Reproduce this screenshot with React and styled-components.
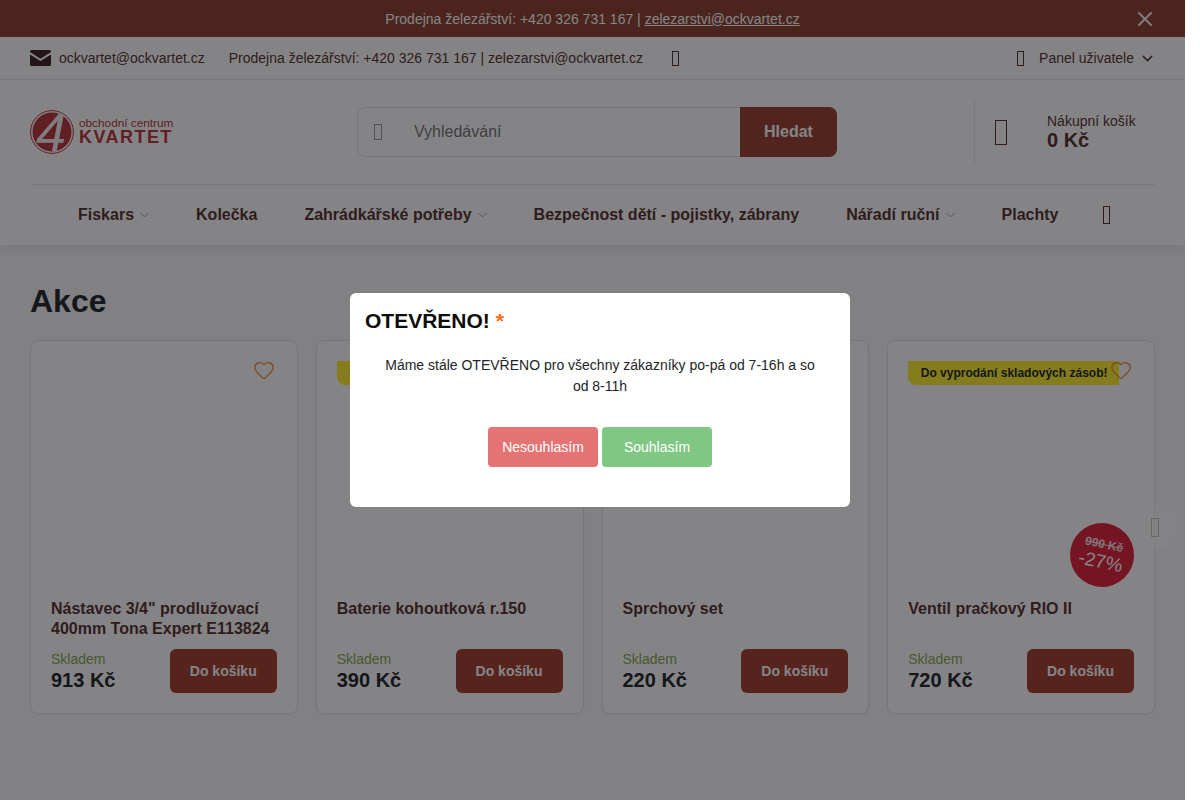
import React from 'react';
import styled, { createGlobalStyle } from 'styled-components';
import { ChevronDown, Heart, X } from 'lucide-react';

const GlobalStyle = createGlobalStyle`
  html, body {
    margin: 0;
    height: 800px;
    overflow: hidden;
    background: #ffffff;
  }
  * {
    box-sizing: border-box;
  }
  body {
    font-family: "Liberation Sans", Arial, sans-serif;
    color: #212529;
  }
`;

const Page = styled.div`
  width: 1185px;
  height: 800px;
  background: #f9f9f9;
  position: relative;
  overflow: hidden;
`;

const TopBar = styled.div`
  height: 37px;
  display: grid;
  grid-template-columns: 1fr auto 1fr;
  align-items: center;
  background: #8c3e2e;
  color: #ffffff;
  font-size: 14px;

  a {
    color: #ffffff;
    text-decoration: underline;
  }

  svg {
    justify-self: end;
    margin-right: 28px;
    color: #ffffff;
    opacity: 0.9;
  }
`;

const InfoBar = styled.div`
  height: 43px;
  padding: 0 30px;
  display: flex;
  align-items: center;
  justify-content: space-between;
  background: #ffffff;
  border-bottom: 1px solid #ececee;
  font-size: 14px;
  color: #55302c;
`;

const InfoGroup = styled.div`
  display: flex;
  align-items: center;
`;

const MailLink = styled.span`
  display: flex;
  align-items: center;
  gap: 8px;
  margin-right: 24px;
`;

// box the browser draws for an icon font that did not load
const Tofu = styled.span`
  display: inline-block;
  flex: none;
  width: ${p => p.$w}px;
  height: ${p => p.$h}px;
  border: 1px solid ${p => p.$color || 'currentColor'};
`;

const InfoIcon = styled(Tofu)`
  margin-left: 29px;
`;

const PanelLink = styled.span`
  display: flex;
  align-items: center;
  margin-right: -1px;

  ${Tofu} {
    margin-right: 15px;
  }

  svg {
    margin-left: 5px;
  }
`;

const Header = styled.div`
  background: #ffffff;
  padding: 0 30px;
  position: relative;
  box-shadow: 0 4px 12px rgba(0, 0, 0, 0.08);
`;

const HeaderMain = styled.div`
  height: 105px;
  display: grid;
  grid-template-columns: 327px 480px 1fr;
  align-items: center;
  border-bottom: 1px solid #e6e6e8;
`;

const Logo = styled.div`
  display: flex;
  align-items: center;
  gap: 5px;
  height: 44px;
  color: #b83238;
`;

const LogoMarkSvg = styled.svg`
  flex: none;
  overflow: visible;
`;

const LogoText = styled.div`
  display: flex;
  flex-direction: column;
  margin-top: -4px;

  span {
    font-size: 11.8px;
    line-height: 12px;
    white-space: nowrap;
  }

  strong {
    margin-top: 1px;
    font-size: 18px;
    line-height: 14px;
    letter-spacing: 1.45px;
    font-weight: 700;
  }
`;

const SearchBox = styled.div`
  height: 50px;
  display: flex;
  align-items: stretch;
  border: 1px solid #e2e2e6;
  border-radius: 8px;
  background: #ffffff;
`;

const SearchIcon = styled.div`
  width: 56px;
  padding-left: 16px;
  display: flex;
  align-items: center;
  color: #9a9aa0;
`;

const SearchPlaceholder = styled.div`
  flex: 1;
  display: flex;
  align-items: center;
  font-size: 16px;
  color: #757575;
`;

const SearchButton = styled.button`
  width: 97px;
  margin: -1px;
  border: none;
  border-radius: 0 8px 8px 0;
  background: #983e2c;
  color: #ffffff;
  font-family: inherit;
  font-size: 16px;
  font-weight: 700;
`;

const Cart = styled.div`
  justify-self: end;
  width: 181px;
  height: 64px;
  display: flex;
  align-items: center;
  border-left: 1px solid #e6e6e8;
  padding-left: 20px;
  color: #55302c;
`;

const CartText = styled.div`
  margin-left: 40px;
  display: flex;
  flex-direction: column;

  span {
    font-size: 14px;
    line-height: 16px;
  }

  strong {
    font-size: 20px;
    line-height: 23px;
  }
`;

const Nav = styled.nav`
  height: 60px;
  display: flex;
  align-items: center;
  gap: 47px;
  padding-left: 48px;
  font-size: 16px;
  font-weight: 700;
  color: #55302c;

  ${Tofu} {
    margin-left: -2px;
  }
`;

const NavItem = styled.span`
  display: flex;
  align-items: center;
  gap: 6px;
  white-space: nowrap;

  svg {
    color: #a0a0a4;
  }
`;

const Content = styled.main`
  padding: 37px 30px 0;
`;

const Heading = styled.h1`
  margin: 0 0 20px;
  font-size: 32px;
  line-height: 38px;
  font-weight: 700;
  color: #212529;
`;

const CardGrid = styled.div`
  position: relative;
  display: grid;
  grid-template-columns: repeat(4, 1fr);
  gap: 18px;
`;

const Card = styled.article`
  position: relative;
  padding: 20px;
  background: #ffffff;
  border: 1px solid #e2e2e6;
  border-radius: 8px;
  box-shadow: 0 1px 3px rgba(0, 0, 0, 0.05);
`;

const ImageArea = styled.div`
  height: 238px;
`;

const Badge = styled.div`
  position: absolute;
  top: 20px;
  left: 20px;
  height: 24px;
  width: 211px;
  padding-left: 12.500px;
  display: flex;
  align-items: center;
  background: #ffee2c;
  border-bottom-left-radius: 8px;
  font-size: 12px;
  font-weight: 700;
  color: #212529;
  white-space: nowrap;
`;

const Wish = styled.span`
  position: absolute;
  top: 18px;
  right: 22px;
  color: #f08a3a;
  display: flex;
`;

const Discount = styled.div`
  position: absolute;
  right: 20px;
  top: 182px;
  width: 64px;
  height: 64px;
  border-radius: 50%;
  background: #e0203a;
  color: #ffffff;
  display: flex;
  flex-direction: column;
  align-items: center;
  justify-content: center;
  transform: rotate(12deg);

  s {
    font-size: 12px;
    line-height: 13px;
    font-weight: 700;
    opacity: 0.85;
  }

  span {
    font-size: 19px;
    line-height: 21px;
  }
`;

const Title = styled.h3`
  margin: 0;
  height: 40px;
  font-size: 16px;
  line-height: 20px;
  font-weight: 700;
  color: #55302c;
`;

const CardFooter = styled.div`
  margin-top: 10px;
  display: flex;
  align-items: flex-start;
  justify-content: space-between;
`;

const Stock = styled.div`
  padding-top: 2px;
  display: flex;
  flex-direction: column;

  span {
    font-size: 14px;
    line-height: 16px;
    color: #8aa552;
  }

  strong {
    font-size: 20px;
    line-height: 26px;
    color: #212529;
  }
`;

const CartButton = styled.button`
  width: 107px;
  height: 44px;
  border: none;
  border-radius: 6px;
  background: #a33f2c;
  color: #ffffff;
  font-family: inherit;
  font-size: 14px;
  font-weight: 700;
`;

const CarouselNext = styled.div`
  position: absolute;
  right: -23px;
  top: 164px;
  width: 46px;
  height: 46px;
  border-radius: 50%;
  background: rgba(255, 255, 255, 0.6);
  display: flex;
  align-items: center;
  justify-content: center;
  color: #cdbfbb;
`;

const Overlay = styled.div`
  position: absolute;
  inset: 0;
  background: rgba(10, 10, 14, 0.5);
  display: flex;
  justify-content: center;
  padding: 293px 0 0 15px;
`;

const Modal = styled.div`
  width: 500px;
  height: 214px;
  padding: 15px;
  background: #ffffff;
  border-radius: 6px;
  color: #212529;
`;

const ModalTitle = styled.h2`
  margin: 0;
  font-size: 21px;
  line-height: 25px;
  font-weight: 700;
  color: #0c0c0c;

  span {
    color: #ff6a13;
  }
`;

const ModalText = styled.p`
  margin: 22px 0 0;
  padding: 0 20px;
  font-size: 14px;
  line-height: 21px;
  text-align: center;
`;

const ModalActions = styled.div`
  margin-top: 30px;
  display: flex;
  justify-content: center;
  gap: 4px;
`;

const ModalButton = styled.button`
  width: 110px;
  height: 40px;
  border: none;
  border-radius: 4px;
  background: ${p => p.$bg};
  color: #ffffff;
  font-family: inherit;
  font-size: 14px;
`;

const products = [
  { name: 'Nástavec 3/4" prodlužovací 400mm Tona Expert E113824', price: '913 Kč' },
  { name: 'Baterie kohoutková r.150', price: '390 Kč', badge: true },
  { name: 'Sprchový set', price: '220 Kč' },
  { name: 'Ventil pračkový RIO II', price: '720 Kč', badge: true, oldPrice: '990 Kč', discount: '-27%' }
];

const navItems = [
  { label: 'Fiskars', sub: true },
  { label: 'Kolečka' },
  { label: 'Zahrádkářské potřeby', sub: true },
  { label: 'Bezpečnost dětí - pojistky, zábrany' },
  { label: 'Nářadí ruční', sub: true },
  { label: 'Plachty' }
];

function MailIcon() {
  return (
    <svg width="21" height="16" viewBox="0 0 21 16">
      <path
        d="M1.5 0h18A1.5 1.5 0 0 1 21 1.5v.6l-10.5 6.6L0 2.100v-.6A1.5 1.5 0 0 1 1.5 0z"
        fill="#3e1d20"
      />
      <path
        d="M0 4.4l10.5 6.500L21 4.400v10.100a1.500 1.500 0 0 1-1.500 1.500h-18A1.500 1.500 0 0 1 0 14.500z"
        fill="#3e1d20"
      />
    </svg>
  );
}

function LogoMark() {
  return (
    <LogoMarkSvg width="44" height="44" viewBox="0 0 44 44">
      <circle cx="22" cy="22" r="21.400" fill="none" stroke="#b83238" strokeWidth="1" />
      <circle cx="22" cy="22" r="19.500" fill="#b83238" />
      <text
        x="21"
        y="41"
        fontFamily="Liberation Sans"
        fontSize="54"
        fontStyle="italic"
        textAnchor="middle"
        fill="#f4eef0"
      >
        4
      </text>
    </LogoMarkSvg>
  );
}

function NavChevron() {
  return (
    <svg width="9" height="6" viewBox="0 0 9 6" fill="none">
      <path d="M.5 1l4 4 4-4" stroke="currentColor" strokeWidth="1" />
    </svg>
  );
}

function ProductCard({ product }) {
  return (
    <Card>
      <ImageArea />
      {product.badge && <Badge>Do vyprodání skladových zásob!</Badge>}
      <Wish>
        <Heart size={22} strokeWidth={1.5} />
      </Wish>
      {product.discount && (
        <Discount>
          <s>{product.oldPrice}</s>
          <span>{product.discount}</span>
        </Discount>
      )}
      <Title>{product.name}</Title>
      <CardFooter>
        <Stock>
          <span>Skladem</span>
          <strong>{product.price}</strong>
        </Stock>
        <CartButton>Do košíku</CartButton>
      </CardFooter>
    </Card>
  );
}

export default function App() {
  return (
    <Page>
      <GlobalStyle />
      <TopBar>
        <span />
        <span>
          Prodejna železářství: +420 326 731 167 | <a href="#mail">zelezarstvi@ockvartet.cz</a>
        </span>
        <X size={24} strokeWidth={2} />
      </TopBar>
      <InfoBar>
        <InfoGroup>
          <MailLink>
            <MailIcon />
            ockvartet@ockvartet.cz
          </MailLink>
          Prodejna železářství: +420 326 731 167 | zelezarstvi@ockvartet.cz
          <InfoIcon $w={7} $h={15} />
        </InfoGroup>
        <PanelLink>
          <Tofu $w={7} $h={15} />
          Panel uživatele
          <ChevronDown size={17} strokeWidth={2} />
        </PanelLink>
      </InfoBar>
      <Header>
        <HeaderMain>
          <Logo>
            <LogoMark />
            <LogoText>
              <span>obchodní centrum</span>
              <strong>KVARTET</strong>
            </LogoText>
          </Logo>
          <SearchBox>
            <SearchIcon>
              <Tofu $w={8} $h={16} />
            </SearchIcon>
            <SearchPlaceholder>Vyhledávání</SearchPlaceholder>
            <SearchButton>Hledat</SearchButton>
          </SearchBox>
          <Cart>
            <Tofu $w={12} $h={25} />
            <CartText>
              <span>Nákupní košík</span>
              <strong>0 Kč</strong>
            </CartText>
          </Cart>
        </HeaderMain>
        <Nav>
          {navItems.map(item => (
            <NavItem key={item.label}>
              {item.label}
              {item.sub && <NavChevron />}
            </NavItem>
          ))}
          <Tofu $w={7} $h={18} />
        </Nav>
      </Header>
      <Content>
        <Heading>Akce</Heading>
        <CardGrid>
          {products.map(product => (
            <ProductCard key={product.name} product={product} />
          ))}
          <CarouselNext>
            <Tofu $w={8} $h={19} />
          </CarouselNext>
        </CardGrid>
      </Content>
      <Overlay>
        <Modal>
          <ModalTitle>
            OTEVŘENO! <span>*</span>
          </ModalTitle>
          <ModalText>Máme stále OTEVŘENO pro všechny zákazníky po-pá od 7-16h a so od 8-11h</ModalText>
          <ModalActions>
            <ModalButton $bg="#e57373">Nesouhlasím</ModalButton>
            <ModalButton $bg="#81c784">Souhlasím</ModalButton>
          </ModalActions>
        </Modal>
      </Overlay>
    </Page>
  );
}
